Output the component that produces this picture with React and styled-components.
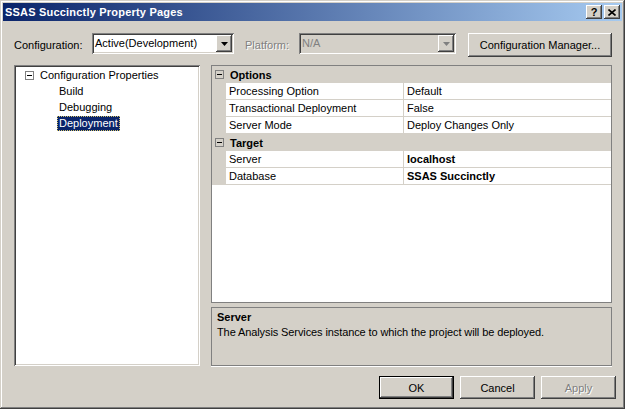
import styled, { createGlobalStyle } from 'styled-components';

const GlobalStyle = createGlobalStyle`
  html, body {
    margin: 0;
    padding: 0;
    background: #ffffff;
  }
  body {
    font-family: "Liberation Sans", Arial, sans-serif;
    font-size: 11px;
    color: #000;
  }
`;

const raised = `
  box-shadow: inset -1px -1px #404040, inset 1px 1px #ffffff,
    inset -2px -2px #808080, inset 2px 2px #d4d0c8;
`;

const sunken = `
  box-shadow: inset 1px 1px #808080, inset -1px -1px #ffffff,
    inset 2px 2px #404040, inset -2px -2px #d4d0c8;
`;

const Window = styled.div`
  width: 625px;
  height: 409px;
  box-sizing: border-box;
  padding: 3px;
  background: #d4d0c8;
  display: flex;
  flex-direction: column;
  box-shadow: inset -1px -1px #404040, inset 1px 1px #d4d0c8,
    inset -2px -2px #808080, inset 2px 2px #ffffff;
`;

const TitleBar = styled.div`
  height: 18px;
  display: flex;
  align-items: center;
  padding: 0 2px;
  background: linear-gradient(to right, #0a246a, #a6caf0);
  color: #fff;
  font-weight: bold;
`;

const TitleText = styled.span`
  flex: 1;
  font-size: 11px;
  letter-spacing: 0.2px;
`;

const TitleButton = styled.div`
  width: 16px;
  height: 14px;
  box-sizing: border-box;
  background: #d4d0c8;
  ${raised}
  color: #000;
  display: flex;
  align-items: center;
  justify-content: center;
  font-size: 11px;
  font-weight: bold;
  margin-left: ${p => (p.$gap ? '2px' : '0')};
`;

const Body = styled.div`
  flex: 1;
  display: flex;
  flex-direction: column;
  padding: 12px 10px 7px 11px;
`;

const TopRow = styled.div`
  display: flex;
  align-items: flex-start;
  height: 24px;
`;

const Label = styled.span`
  width: ${p => p.$w}px;
  margin-left: ${p => p.$ml || 0}px;
  line-height: 24px;
  color: ${p => (p.$disabled ? '#808080' : '#000')};
  text-shadow: ${p => (p.$disabled ? '1px 1px #ffffff' : 'none')};
`;

const Combo = styled.div`
  width: ${p => p.$w}px;
  height: 21px;
  box-sizing: border-box;
  padding: 2px;
  display: flex;
  background: ${p => (p.$disabled ? '#d4d0c8' : '#ffffff')};
  ${sunken}
`;

const ComboText = styled.span`
  flex: 1;
  line-height: 17px;
  padding-left: 1px;
  color: ${p => (p.$disabled ? '#808080' : '#000')};
`;

const ArrowButton = styled.div`
  width: 16px;
  height: 17px;
  box-sizing: border-box;
  background: #d4d0c8;
  ${raised}
  display: flex;
  align-items: center;
  justify-content: center;
`;

const Button = styled.div`
  width: ${p => p.$w || 75}px;
  height: ${p => p.$h || 23}px;
  box-sizing: border-box;
  background: #d4d0c8;
  display: flex;
  align-items: center;
  justify-content: center;
  margin-left: ${p => p.$ml || 0}px;
  color: ${p => (p.$disabled ? '#808080' : '#000')};
  text-shadow: ${p => (p.$disabled ? '1px 1px #ffffff' : 'none')};
  ${p =>
    p.$default
      ? `box-shadow: inset 0 0 0 1px #000, inset -2px -2px #404040, inset 2px 2px #ffffff,
          inset -3px -3px #808080, inset 3px 3px #d4d0c8;`
      : raised}
`;

const Main = styled.div`
  display: flex;
  height: 301px;
  margin-top: 8px;
  gap: 11px;
`;

const TreePanel = styled.div`
  width: 186px;
  box-sizing: border-box;
  background: #fff;
  padding: 2px 2px;
  ${sunken}
`;

const TreeRow = styled.div`
  height: 16px;
  display: flex;
  align-items: center;
  padding-left: ${p => p.$indent}px;
`;

const Expander = styled.span`
  width: 9px;
  height: 9px;
  box-sizing: border-box;
  border: 1px solid #808080;
  background: ${p => p.$bg || '#fff'};
  display: inline-flex;
  align-items: center;
  justify-content: center;
  margin-right: ${p => p.$mr}px;
  &::after {
    content: '';
    width: 5px;
    height: 1px;
    background: #000;
  }
`;

const TreeLabel = styled.span`
  height: 15px;
  line-height: 13px;
  box-sizing: border-box;
  padding: 0 1px;
  border: 1px dotted ${p => (p.$selected ? '#d4c46a' : 'transparent')};
  background: ${p => (p.$selected ? '#0a246a' : 'transparent')};
  color: ${p => (p.$selected ? '#fff' : '#000')};
`;

const RightCol = styled.div`
  width: 401px;
  display: flex;
  flex-direction: column;
  gap: 4px;
`;

const Grid = styled.div`
  height: 238px;
  box-sizing: border-box;
  border: 1px solid #808080;
  background: #fff;
`;

const CategoryRow = styled.div`
  height: 17px;
  box-sizing: border-box;
  display: flex;
  align-items: center;
  padding-left: 3px;
  background: #d4d0c8;
  font-weight: bold;
`;

const PropRow = styled.div`
  height: 17px;
  display: flex;
  background: #d4d0c8;
`;

const Cell = styled.div`
  box-sizing: border-box;
  width: ${p => p.$w}px;
  ${p => (p.$grow ? 'flex: 1;' : '')}
  margin-left: ${p => p.$ml || 0}px;
  height: 16px;
  line-height: 16px;
  padding-left: ${p => p.$pl || 3}px;
  background: #fff;
  font-weight: ${p => (p.$bold ? 'bold' : 'normal')};
  white-space: nowrap;
`;

const Desc = styled.div`
  height: 59px;
  box-sizing: border-box;
  border: 1px solid #808080;
  box-shadow: 0 1px 0 #ffffff;
  padding: 2px 5px;
  line-height: 15px;
  letter-spacing: -0.1px;
`;

const DescTitle = styled.div`
  font-weight: bold;
  letter-spacing: 0;
`;

const ButtonRow = styled.div`
  display: flex;
  justify-content: flex-end;
  margin-top: 10px;
  margin-right: -4px;
  gap: 6px;
`;

const DownArrow = ({ color = '#000' }) => (
  <svg width="7" height="4" viewBox="0 0 7 4">
    <path d="M0 0h7L3.5 4z" fill={color} />
  </svg>
);

const CloseGlyph = () => (
  <svg width="8" height="7" viewBox="0 0 8 7">
    <path d="M0.5 0.5L7.5 6.5M7.5 0.5L0.5 6.5" stroke="#000" strokeWidth="1.6" />
  </svg>
);

const categories = [
  {
    name: 'Options',
    props: [
      ['Processing Option', 'Default'],
      ['Transactional Deployment', 'False'],
      ['Server Mode', 'Deploy Changes Only'],
    ],
  },
  {
    name: 'Target',
    props: [
      ['Server', 'localhost', true],
      ['Database', 'SSAS Succinctly', true],
    ],
  },
];

export default function App() {
  return (
    <>
      <GlobalStyle />
      <Window>
        <TitleBar>
          <TitleText>SSAS Succinctly Property Pages</TitleText>
          <TitleButton>?</TitleButton>
          <TitleButton $gap>
            <CloseGlyph />
          </TitleButton>
        </TitleBar>
        <Body>
          <TopRow>
            <Label $w={78}>Configuration:</Label>
            <Combo $w={142}>
              <ComboText>Active(Development)</ComboText>
              <ArrowButton>
                <DownArrow />
              </ArrowButton>
            </Combo>
            <Label $w={54} $ml={11} $disabled>
              Platform:
            </Label>
            <Combo $w={157} $disabled>
              <ComboText $disabled>N/A</ComboText>
              <ArrowButton>
                <DownArrow color="#808080" />
              </ArrowButton>
            </Combo>
            <Button $w={144} $h={24} $ml={12}>
              Configuration Manager...
            </Button>
          </TopRow>
          <Main>
            <TreePanel>
              <TreeRow $indent={9}>
                <Expander $mr={6} />
                Configuration Properties
              </TreeRow>
              <TreeRow $indent={41}>
                <TreeLabel>Build</TreeLabel>
              </TreeRow>
              <TreeRow $indent={41}>
                <TreeLabel>Debugging</TreeLabel>
              </TreeRow>
              <TreeRow $indent={41}>
                <TreeLabel $selected>Deployment</TreeLabel>
              </TreeRow>
            </TreePanel>
            <RightCol>
              <Grid>
                {categories.map(cat => (
                  <div key={cat.name}>
                    <CategoryRow>
                      <Expander $mr={6} $bg="transparent" />
                      {cat.name}
                    </CategoryRow>
                    {cat.props.map(([name, value, bold]) => (
                      <PropRow key={name}>
                        <Cell $w={177} $ml={14}>
                          {name}
                        </Cell>
                        <Cell $grow $ml={1} $bold={bold}>
                          {value}
                        </Cell>
                      </PropRow>
                    ))}
                  </div>
                ))}
              </Grid>
              <Desc>
                <DescTitle>Server</DescTitle>
                The Analysis Services instance to which the project will be deployed.
              </Desc>
            </RightCol>
          </Main>
          <ButtonRow>
            <Button $default>OK</Button>
            <Button>Cancel</Button>
            <Button $disabled>Apply</Button>
          </ButtonRow>
        </Body>
      </Window>
    </>
  );
}
